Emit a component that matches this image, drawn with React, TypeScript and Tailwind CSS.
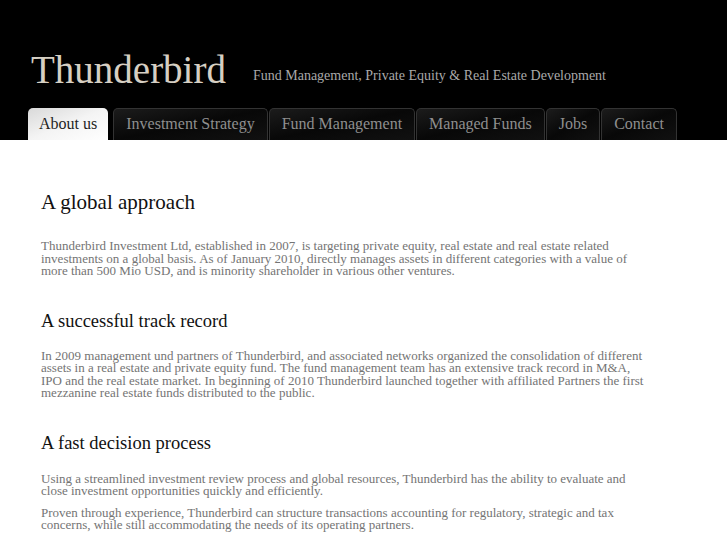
import React from "react";

const tabs = [
  "About us",
  "Investment Strategy",
  "Fund Management",
  "Managed Funds",
  "Jobs",
  "Contact",
];

export default function App() {
  return (
    <div className="min-h-[545px] w-full bg-white" style={{ fontFamily: '"Liberation Serif", "Times New Roman", serif' }}>
      <header className="h-[140px] bg-black flex flex-col">
        <div className="flex items-baseline pt-[50px] pl-[31px]">
          <div className="text-[39px] leading-[40px] text-[#d6cfc3]">Thunderbird</div>
          <div className="ml-[27px] text-[14px] leading-[16px] text-[#a9a9a9] -translate-y-[3px]">
            Fund Management, Private Equity &amp; Real Estate Development
          </div>
        </div>
        <nav className="mt-auto flex gap-[1px] pl-[28px]">
          {tabs.map((t, i) =>
            i === 0 ? (
              <div
                key={t}
                className="mr-[4px] h-[32px] px-[11px] pb-[1px] flex items-center rounded-t-[5px] bg-gradient-to-br from-[#d9d9d9] via-[#f4f4f4] to-white text-[16px] text-[#1e1e1e]"
              >
                {t}
              </div>
            ) : (
              <div
                key={t}
                className="h-[32px] px-[12px] pb-[1px] flex items-center rounded-t-[5px] border border-b-0 border-[#333] bg-gradient-to-br from-[#1c1c1c] via-[#080808] to-[#111] text-[16px] text-[#8f8f8f]"
              >
                {t}
              </div>
            )
          )}
        </nav>
      </header>
      <main className="pl-[41px] w-[645px] pb-4">
        <h1 className="mt-[50px] text-[21px] leading-[24px] text-[#111]">A global approach</h1>
        <p className="mt-[26px] text-[13px] leading-[12.5px] text-[#747474]">
          Thunderbird Investment Ltd, established in 2007, is targeting private equity, real estate and real estate related
          investments on a global basis. As of January 2010, directly manages assets in different categories with a value of
          more than 500 Mio USD, and is minority shareholder in various other ventures.
        </p>
        <h2 className="mt-[32px] text-[18.5px] leading-[22px] text-[#111]">A successful track record</h2>
        <p className="mt-[18px] text-[13px] leading-[12.5px] text-[#747474]">
          In 2009 management und partners of Thunderbird, and associated networks organized the consolidation of different
          assets in a real estate and private equity fund. The fund management team has an extensive track record in M&amp;A,
          IPO and the real estate market. In beginning of 2010 Thunderbird launched together with affiliated Partners the first
          mezzanine real estate funds distributed to the public.
        </p>
        <h2 className="mt-[32px] text-[18.5px] leading-[22px] text-[#111]">A fast decision process</h2>
        <p className="mt-[19px] text-[13px] leading-[12.5px] text-[#747474]">
          Using a streamlined investment review process and global resources, Thunderbird has the ability to evaluate and
          close investment opportunities quickly and efficiently.
        </p>
        <p className="mt-[9px] text-[13px] leading-[12.5px] text-[#747474]">
          Proven through experience, Thunderbird can structure transactions accounting for regulatory, strategic and tax
          concerns, while still accommodating the needs of its operating partners.
        </p>
      </main>
    </div>
  );
}
